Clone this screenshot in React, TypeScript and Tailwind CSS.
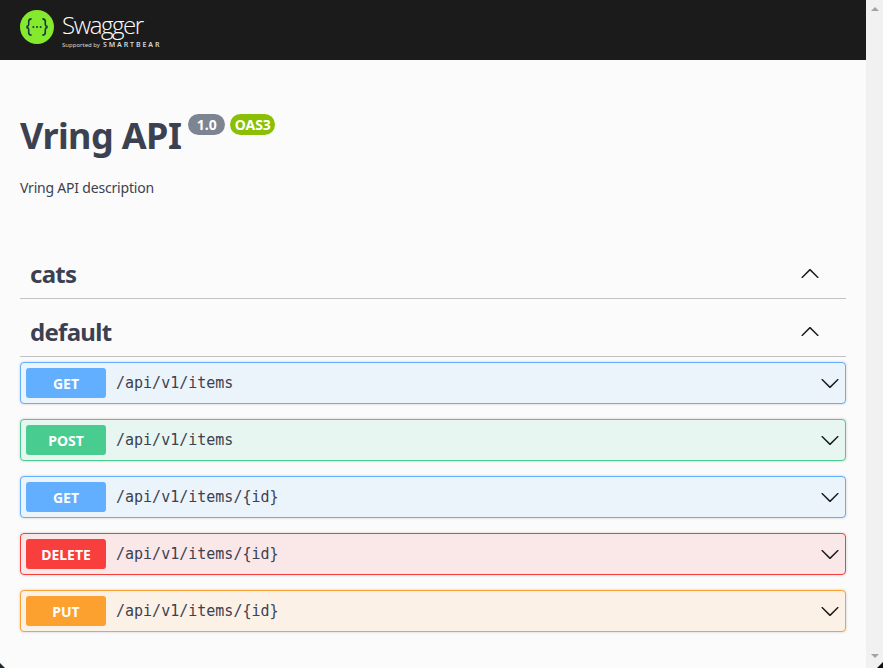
import React from "react";

const ops = [
  { method: "GET", path: "/api/v1/items", box: "border-[#61affe] bg-[#ebf3fb]", badge: "bg-[#61affe]" },
  { method: "POST", path: "/api/v1/items", box: "border-[#49cc90] bg-[#e7f6f0]", badge: "bg-[#49cc90]" },
  { method: "GET", path: "/api/v1/items/{id}", box: "border-[#61affe] bg-[#ebf3fb]", badge: "bg-[#61affe]" },
  { method: "DELETE", path: "/api/v1/items/{id}", box: "border-[#f93e3e] bg-[#fae7e7]", badge: "bg-[#f93e3e]" },
  { method: "PUT", path: "/api/v1/items/{id}", box: "border-[#fca130] bg-[#fbf1e6]", badge: "bg-[#fca130]" },
];

function Chevron({ up }: { up?: boolean }) {
  return (
    <svg width="20" height="20" viewBox="0 0 20 20" className={up ? "rotate-180" : ""} fill="#1b1b1b">
      <path d="M17.418 6.109c.272-.268.709-.268.979 0s.271.701 0 .969l-7.908 7.83c-.27.268-.707.268-.979 0l-7.908-7.83c-.27-.268-.27-.701 0-.969.271-.268.709-.268.979 0L10 13.25l7.418-7.141z" />
    </svg>
  );
}

function Logo() {
  return (
    <svg width="34" height="34" viewBox="0 0 34 34" className="shrink-0">
      <circle cx="17" cy="17" r="17" fill="#85ea2d" />
      <path
        d="M11.6 9.4c-2.2.1-2.9 1-2.9 2.7v3c0 1.2-.5 1.7-1.6 1.8v1.2c1.1.1 1.6.6 1.6 1.8v3c0 1.7.7 2.6 2.9 2.7M22.4 9.4c2.2.1 2.9 1 2.9 2.7v3c0 1.2.5 1.7 1.6 1.8v1.2c-1.1.1-1.6.6-1.6 1.8v3c0 1.7-.7 2.6-2.9 2.7"
        fill="none"
        stroke="#173646"
        strokeWidth="1.6"
        transform="translate(0 -0.5)"
      />
      <circle cx="13.4" cy="17" r="1" fill="#173646" />
      <circle cx="17" cy="17" r="1" fill="#173646" />
      <circle cx="20.6" cy="17" r="1" fill="#173646" />
    </svg>
  );
}

function Tag({ name }: { name: string }) {
  return (
    <div className="flex h-[47px] items-center justify-between border-b border-[#c2c2c6] pb-[3px] pl-[10px] pr-[26px]">
      <h3 className="text-[24px] leading-none font-bold tracking-[-0.7px] text-[#3b4151]">{name}</h3>
      <Chevron up />
    </div>
  );
}

export default function App() {
  return (
    <div className="relative flex h-[668px] overflow-hidden font-['Noto_Sans',sans-serif]">
      <main className="w-[866px] shrink-0 bg-[#fbfbfb]">
        <header className="flex h-[60px] items-center gap-[8px] bg-[#1b1b1b] pl-5 pb-[6px]">
          <Logo />
          <div className="mt-[5px] flex flex-col text-white">
            <span className="font-['Open_Sans',sans-serif] text-[24px] leading-[30px] font-light tracking-[-1.4px]">Swagger</span>
            <span className="flex h-[10px] items-baseline gap-[3px] leading-[10px] text-[#d8d8d8]">
              <span className="text-[6px]">Supported by</span>
              <span className="text-[7px] font-semibold tracking-[1.9px]">SMARTBEAR</span>
            </span>
          </div>
        </header>

        <section className="px-5 pt-[50px]">
          <div className="flex items-start">
            <h2 className="mt-[1px] text-[36px] leading-[50px] font-bold tracking-[-0.6px] text-[#3b4151]">Vring API</h2>
            <span className="mt-1 ml-[7px] flex h-[21px] w-[37px] items-center justify-center rounded-[57px] bg-[#7d8492] text-[14px] font-bold text-white">1.0</span>
            <span className="mt-1 ml-[5px] flex h-[21px] w-[45px] items-center justify-center rounded-[57px] bg-[#89bf04] text-[14px] font-bold text-white">OAS3</span>
          </div>
          <p className="mt-[17px] text-[14px] leading-5 tracking-[-0.2px] text-[#3b4151]">Vring API description</p>

          <div className="mt-[54px]">
            <Tag name="cats" />
            <div className="mt-[11px]">
              <Tag name="default" />
            </div>
          </div>

          <div className="mt-[5px] flex flex-col gap-[15px]">
            {ops.map((op, i) => (
              <div key={i} className={`flex h-[42px] items-center rounded border pl-[5px] pr-[5px] shadow-[0_0_3px_rgba(0,0,0,0.19)] ${op.box}`}>
                <span className={`flex h-[30px] w-20 items-center justify-center rounded-[3px] text-[14px] font-bold text-white ${op.badge}`}>{op.method}</span>
                <span className="ml-[10px] flex-1 font-['DejaVu_Sans_Mono',monospace] text-[15px] text-[#3b4151]">{op.path}</span>
                <Chevron />
              </div>
            ))}
          </div>
        </section>
      </main>

      <aside className="flex w-[17px] shrink-0 flex-col items-center justify-between bg-[#f1f1f1] pt-[7px] pb-[10px]">
        <span className="h-0 w-0 border-x-[4px] border-b-[4px] border-x-transparent border-b-[#a3a3a3]" />
        <span className="h-0 w-0 border-x-[4px] border-t-[4px] border-x-transparent border-t-[#a3a3a3]" />
      </aside>

      {/* rounded window corners */}
      <svg width="5" height="5" viewBox="0 0 5 5" className="absolute bottom-0 left-0">
        <path d="M0 0L5 5H0z" fill="#1b2a33" />
      </svg>
      <svg width="6" height="6" viewBox="0 0 6 6" className="absolute right-0 bottom-0">
        <path d="M6 0L0 6H6z" fill="#111111" />
      </svg>
    </div>
  );
}
